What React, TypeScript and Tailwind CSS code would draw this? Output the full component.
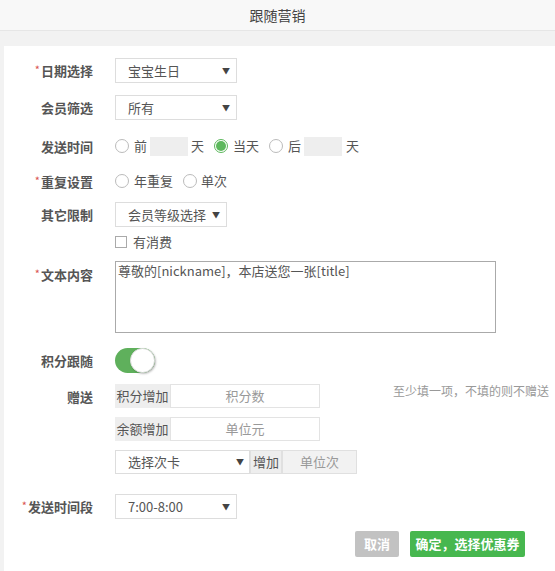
import React from "react";

const font = { fontFamily: '"Noto Sans CJK SC", "Noto Sans", sans-serif' };

function Label({ text, req }: { text: string; req?: boolean }) {
  return (
    <div className="w-[89px] shrink-0 text-right text-[13px] font-bold text-[#555] leading-none">
      {req && <span className="text-[#d9534f] text-[11px] font-normal mr-[1px] align-top">*</span>}
      {text}
    </div>
  );
}

function Select({ value, w }: { value: string; w: string }) {
  return (
    <div className={`${w} h-[25px] border border-[#ddd] bg-white flex items-center justify-between pl-[12px] pr-[6px] text-[13px] text-[#555]`}>
      <span>{value}</span>
      <span className="text-[8px] text-[#444]">▼</span>
    </div>
  );
}

function Radio({ checked, ml }: { checked?: boolean; ml?: string }) {
  return checked ? (
    <span className={`${ml ?? ""} shrink-0 w-[14px] h-[14px] rounded-full border border-[#5cb85c] flex items-center justify-center bg-white`}>
      <span className="block w-[10px] h-[10px] rounded-full bg-[#5cb85c]" />
    </span>
  ) : (
    <span className={`${ml ?? ""} shrink-0 block w-[14px] h-[14px] rounded-full border border-[#bbb] bg-white`} />
  );
}

export default function App() {
  return (
    <div className="w-[555px] h-[571px] bg-[#f2f2f2] overflow-hidden" style={font}>
      <div className="h-[31px] bg-[#f8f8f8] border-b border-[#e6e6e6] flex items-center justify-center text-[14px] text-[#444]">
        跟随营销
      </div>
      <div className="h-[15px]" />
      <div className="ml-[4px] bg-white h-[525px] pt-[12px]">
        {/* 日期选择 */}
        <div className="flex items-center">
          <Label text="日期选择" req />
          <div className="ml-[22px]"><Select value="宝宝生日" w="w-[122px]" /></div>
        </div>
        {/* 会员筛选 */}
        <div className="flex items-center mt-[12px]">
          <Label text="会员筛选" />
          <div className="ml-[22px]"><Select value="所有" w="w-[122px]" /></div>
        </div>
        {/* 发送时间 */}
        <div className="flex items-center mt-[16px] h-[20px]">
          <Label text="发送时间" />
          <div className="ml-[22px] flex items-center text-[13px] text-[#555]">
            <Radio />
            <span className="ml-[5px]">前</span>
            <span className="ml-[3px] shrink-0 w-[38px] h-[19px] bg-[#eee]" />
            <span className="ml-[3px]">天</span>
            <Radio checked ml="ml-[10px]" />
            <span className="ml-[5px]">当天</span>
            <Radio ml="ml-[10px]" />
            <span className="ml-[5px]">后</span>
            <span className="ml-[3px] shrink-0 w-[38px] h-[19px] bg-[#eee]" />
            <span className="ml-[4px]">天</span>
          </div>
        </div>
        {/* 重复设置 */}
        <div className="flex items-center mt-[15px] h-[20px]">
          <Label text="重复设置" req />
          <div className="ml-[22px] flex items-center text-[13px] text-[#555]">
            <Radio />
            <span className="ml-[5px]">年重复</span>
            <Radio ml="ml-[10px]" />
            <span className="ml-[4px]">单次</span>
          </div>
        </div>
        {/* 其它限制 */}
        <div className="flex items-center mt-[11px]">
          <Label text="其它限制" />
          <div className="ml-[22px]"><Select value="会员等级选择" w="w-[112px]" /></div>
        </div>
        <div className="flex items-center mt-[8px] h-[14px]">
          <div className="w-[89px]" />
          <div className="ml-[22px] flex items-center text-[13px] text-[#555]">
            <span className="block w-[12px] h-[12px] border border-[#aaa] bg-white" />
            <span className="ml-[6px]">有消费</span>
          </div>
        </div>
        {/* 文本内容 */}
        <div className="flex items-start mt-[12px]">
          <div className="pt-[7px]"><Label text="文本内容" req /></div>
          <div className="ml-[22px] w-[381px] h-[72px] border border-[#aaa] px-[2px] text-[13px] text-[#555] leading-[18px]">
            尊敬的[nickname]，本店送您一张[title]
          </div>
        </div>
        {/* 积分跟随 */}
        <div className="flex items-center mt-[15px]">
          <Label text="积分跟随" />
          <div className="ml-[22px] relative w-[40px] h-[25px] rounded-full bg-[#5fb05c]">
            <span className="absolute right-[0px] top-[0px] w-[25px] h-[25px] rounded-full bg-white border border-[#ddd] shadow-[1px_1px_2px_rgba(0,0,0,0.25)]" />
          </div>
        </div>
        {/* 赠送 */}
        <div className="flex items-start mt-[11px]">
          <div className="pt-[6px]"><Label text="赠送" /></div>
          <div className="ml-[22px] flex flex-col">
            <div className="flex items-center h-[24px]">
              <div className="shrink-0 h-[24px] w-[55px] bg-[#eee] flex items-center justify-center text-[13px] text-[#555]">积分增加</div>
              <div className="shrink-0 h-[24px] w-[150px] border border-[#e3e3e3] flex items-center justify-center text-[13px] text-[#999]">积分数</div>
              <div className="shrink-0 whitespace-nowrap ml-[73px] text-[12px] text-[#999] self-start mt-[-2px]">至少填一项，不填的则不赠送</div>
            </div>
            <div className="flex items-center h-[24px] mt-[9px]">
              <div className="shrink-0 h-[24px] w-[55px] bg-[#eee] flex items-center justify-center text-[13px] text-[#555]">余额增加</div>
              <div className="shrink-0 h-[24px] w-[150px] border border-[#e3e3e3] flex items-center justify-center text-[13px] text-[#999]">单位元</div>
            </div>
            <div className="flex items-center h-[24px] mt-[9px]">
              <div className="shrink-0 w-[135px] h-[24px] border border-[#ddd] flex items-center justify-between pl-[12px] pr-[5px] text-[13px] text-[#555]">
                <span>选择次卡</span>
                <span className="text-[8px] text-[#444]">▼</span>
              </div>
              <div className="shrink-0 h-[24px] w-[32px] bg-[#eee] border border-[#e0e0e0] flex items-center justify-center text-[13px] text-[#555]">增加</div>
              <div className="shrink-0 h-[24px] w-[75px] bg-[#f2f2f2] border border-[#e0e0e0] flex items-center justify-center text-[13px] text-[#999]">单位次</div>
            </div>
          </div>
        </div>
        {/* 发送时间段 */}
        <div className="flex items-center mt-[20px]">
          <Label text="发送时间段" req />
          <div className="ml-[22px]"><Select value="7:00-8:00" w="w-[122px]" /></div>
        </div>
        {/* Buttons */}
        <div className="flex items-center mt-[12px] ml-[351px]">
          <div className="w-[44px] h-[26px] rounded-[2px] bg-[#c2c2c2] text-white text-[13px] font-bold flex items-center justify-center">取消</div>
          <div className="ml-[11px] w-[115px] h-[26px] rounded-[2px] bg-[#47b74f] text-white text-[13px] font-bold flex items-center justify-center">确定，选择优惠券</div>
        </div>
      </div>
    </div>
  );
}
